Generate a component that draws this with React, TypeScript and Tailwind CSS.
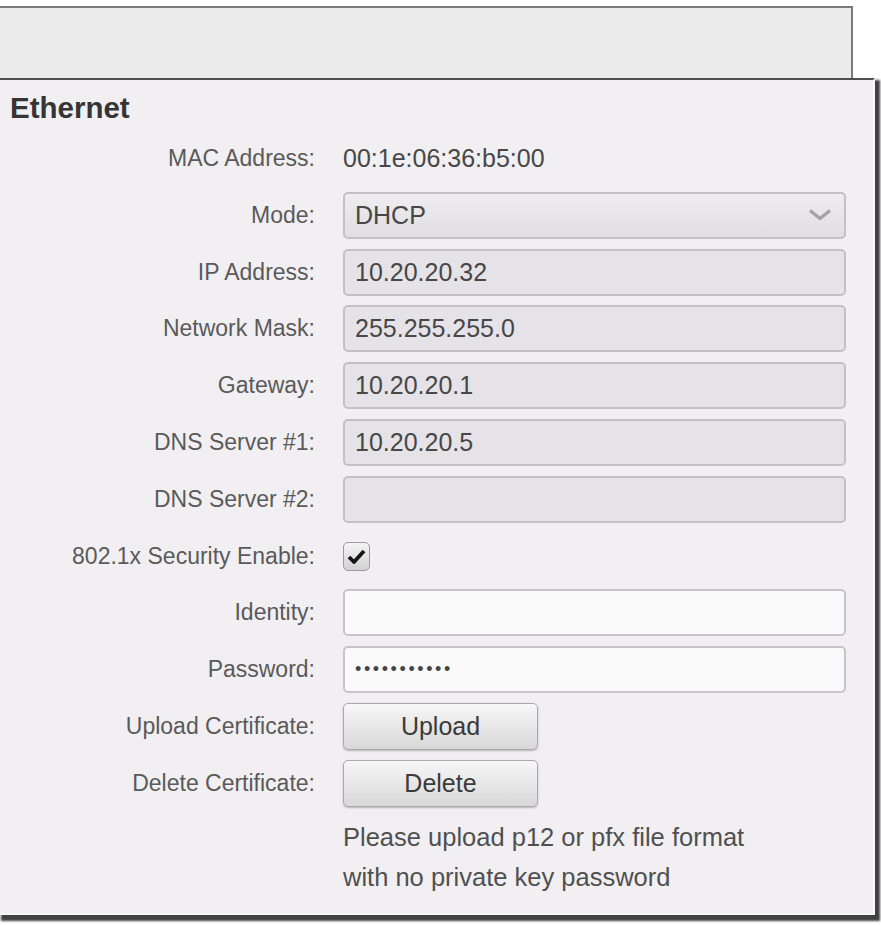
import React from "react";

const labelCls = "w-[315px] shrink-0 text-right text-[23px] leading-none text-[#5a5a5a]";
const grayInput =
  "h-[47px] w-[503px] rounded-[5px] border-2 border-[#c3c1c5] bg-[#e5e3e7] px-[10px] text-[25px] text-[#474747] outline-none font-['Liberation_Sans',Arial,sans-serif]";
const whiteInput =
  "h-[47px] w-[503px] rounded-[5px] border-2 border-[#c6c4c8] bg-[#fbfafb] px-[10px] text-[25px] text-[#474747] outline-none font-['Liberation_Sans',Arial,sans-serif]";
const btnCls =
  "flex h-[47px] w-[195px] items-center justify-center rounded-[5px] border border-[#a9a9a9] bg-gradient-to-b from-[#f7f7f7] to-[#d8d8d8] text-[25px] text-[#3a3a3a] shadow-[0_1px_2px_rgba(0,0,0,0.25)]";

function Row({ label, children }: { label: string; children: React.ReactNode }) {
  return (
    <div className="flex h-[47px] items-center">
      <div className={labelCls}>{label}</div>
      <div className="ml-[28px] flex items-center">{children}</div>
    </div>
  );
}

export default function App() {
  return (
    <div className="min-h-[925px] w-[881px] bg-white font-['Liberation_Sans',Arial,sans-serif]">
      <div className="h-[6px]" />
      <div className="h-[72px] w-[853px] border-t-2 border-r-2 border-[#7a7a7a] bg-[#ebebeb]" />
      <div className="w-[875px] border-t-2 border-r-2 border-b-2 border-t-[#4f4f4f] border-r-[#f7f7f7] border-b-[#f7f7f7] bg-[#f1eff2] pb-[16px] shadow-[3px_4px_2px_2px_rgba(55,55,55,0.95)]">
        <div className="pl-[10px] pt-[12px] text-[29.5px] font-bold leading-[32px] text-[#353535]">Ethernet</div>
        <div className="mt-[11px] flex flex-col gap-[9.8px]">
          <Row label="MAC Address:">
            <span className="text-[25px] text-[#474747]">00:1e:06:36:b5:00</span>
          </Row>
          <Row label="Mode:">
            <div className="relative">
              <select
                className={grayInput + " appearance-none bg-gradient-to-b from-[#efedf0] to-[#e0dee2]"}
                defaultValue="DHCP"
              >
                <option>DHCP</option>
                <option>Static</option>
              </select>
              <svg
                className="pointer-events-none absolute right-[14px] top-1/2 -translate-y-1/2"
                width="24"
                height="13"
                viewBox="0 0 24 13"
              >
                <polyline points="2,2 12,10 22,2" fill="none" stroke="#a3a3a3" strokeWidth="3.5" strokeLinejoin="round" />
              </svg>
            </div>
          </Row>
          <Row label="IP Address:">
            <input readOnly className={grayInput} value="10.20.20.32" />
          </Row>
          <Row label="Network Mask:">
            <input readOnly className={grayInput} value="255.255.255.0" />
          </Row>
          <Row label="Gateway:">
            <input readOnly className={grayInput} value="10.20.20.1" />
          </Row>
          <Row label="DNS Server #1:">
            <input readOnly className={grayInput} value="10.20.20.5" />
          </Row>
          <Row label="DNS Server #2:">
            <input readOnly className={grayInput} value="" />
          </Row>
          <Row label="802.1x Security Enable:">
            <div className="flex h-[29px] w-[27px] items-center justify-center rounded-[5px] border border-[#9c9c9c] bg-gradient-to-b from-[#f4f4f4] to-[#d2d2d2]">
              <svg width="19" height="15" viewBox="0 0 19 15">
                <path d="M2 8 L7 13 L17 2" fill="none" stroke="#151515" strokeWidth="3.8" strokeLinejoin="round" />
              </svg>
            </div>
          </Row>
          <Row label="Identity:">
            <input readOnly className={whiteInput} value="" />
          </Row>
          <Row label="Password:">
            <div className={whiteInput + " flex items-center"}>
              <span className="text-[18px] tracking-[2.6px] text-[#444]">•••••••••••</span>
            </div>
          </Row>
          <Row label="Upload Certificate:">
            <button className={btnCls}>Upload</button>
          </Row>
          <Row label="Delete Certificate:">
            <button className={btnCls}>Delete</button>
          </Row>
          <div className="ml-[343px] text-[25.5px] leading-[40px] text-[#505050]">
            Please upload p12 or pfx file format
            <br />
            with no private key password
          </div>
        </div>
      </div>
    </div>
  );
}
